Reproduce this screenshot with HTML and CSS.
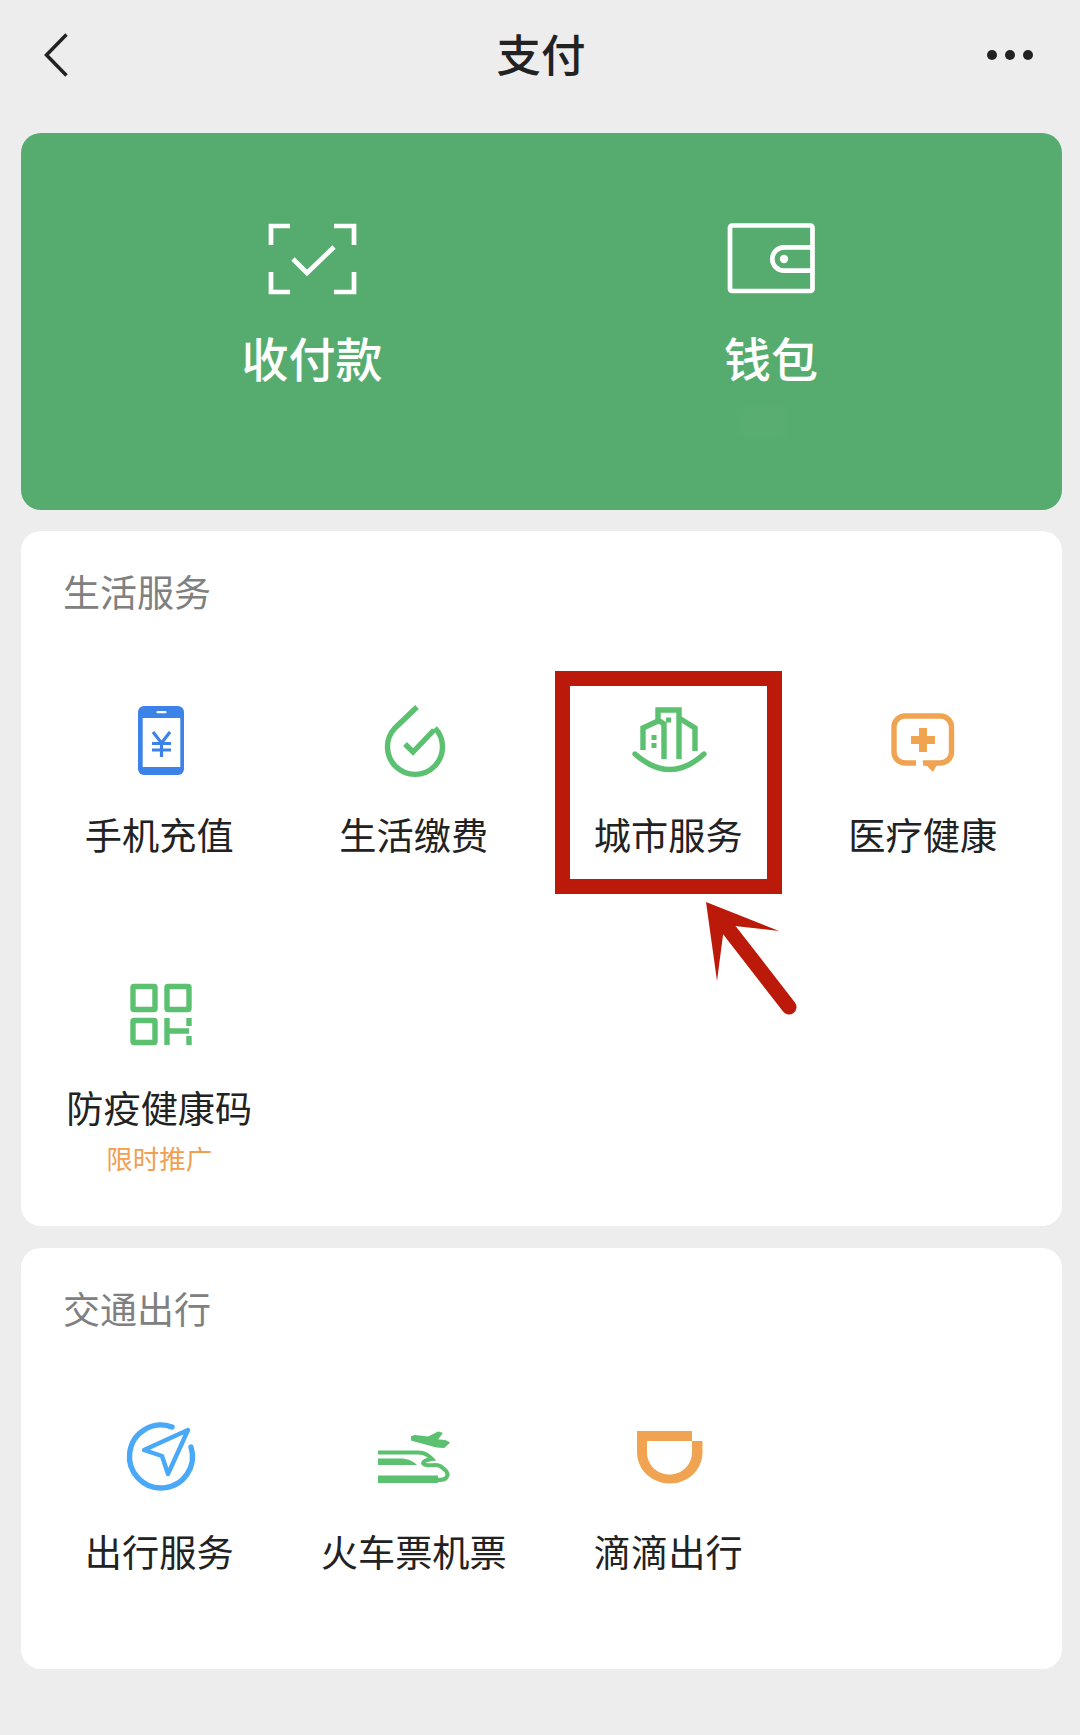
FILE: index.html
```html
<!DOCTYPE html>
<html lang="zh-CN">
	<head>
		<meta charset="UTF-8" />
		<meta name="viewport" content="width=device-width, initial-scale=1.0" />
		<title>支付</title>

		<link rel="stylesheet" href="styles.css">
	</head>
	<body>
		<header class="topbar">
			<svg class="back" viewBox="0 0 24 44" width="24" height="44">
				<path d="M22.5 1.5 L2.5 22 L22.5 42.5" />
			</svg>
			<h1>支付</h1>
			<div class="more"><i></i><i></i><i></i></div>
		</header>

		<main class="main">
			<section class="pay">
				<div class="pay-item">
					<svg class="pay-icon" viewBox="0 0 100 80" width="100" height="80">
						<path d="M28 7 H9 V26 M72 7 H92 V26 M9 53 V73 H28 M72 73 H92 V53" />
						<path d="M31 40 L45 54 L72 28" />
					</svg>
					<span>收付款</span>
				</div>
				<div class="pay-item">
					<svg class="pay-icon" viewBox="0 0 100 80" width="100" height="80">
						<rect x="9" y="6.5" width="82.5" height="65.5" rx="2" />
						<path d="M91 28.3 H63 A11.7 11.7 0 0 0 63 51.7 H91" />
						<circle class="solid" cx="63" cy="40" r="4.2" />
					</svg>
					<span>钱包</span>
					<div class="smudge"></div>
				</div>
			</section>

			<section class="card">
				<h2>生活服务</h2>
				<div class="grid">
					<div class="cell">
						<svg class="icon" viewBox="0 0 80 80" width="80" height="80">
							<rect x="19" y="5" width="46" height="69" rx="6" fill="#3d82e8" />
							<rect x="23.7" y="17" width="37.6" height="49" fill="#fff" />
							<rect x="37.5" y="10" width="10" height="2.2" rx="1" fill="#fff" />
							<path d="M34 31 L42.5 42 L51 31 M33 42.5 H52 M33 49 H52 M42.5 42 V56" fill="none" stroke="#3d82e8" stroke-width="3.2" />
						</svg>
						<div class="label">手机充值</div>
					</div>
					<div class="cell">
						<svg class="icon green" viewBox="0 0 80 80" width="80" height="80">
							<path d="M43 6 L20.5 27.5 A27.5 27.5 0 1 0 61 27" />
							<path d="M31 43 L39 51 L60 29" />
						</svg>
						<div class="label">生活缴费</div>
					</div>
					<div class="cell">
						<svg class="icon green" viewBox="0 0 80 80" width="80" height="80">
							<path d="M7 53 Q42 84 76 53" stroke-linecap="round" />
							<path d="M36 58 V23 L30 19 V9 H51 V58" />
							<path d="M30 20 L15 27 V49 M51 17 L67 27 V50" />
							<path d="M23.5 34 h5 v5 h-5 z M23.5 42 h5 v5 h-5 z M38 16.5 h5 v5 h-5 z" class="solid" />
						</svg>
						<div class="label">城市服务</div>
						<div class="mark"></div>
						<svg class="arrow" viewBox="0 0 96 130" width="96" height="130">
							<path class="arrow-head" d="M4 0 L77 29 L33 24 L21 33 L15 79 Z" />
							<path class="arrow-tail" d="M28 29 L87 105" />
						</svg>
					</div>
					<div class="cell">
						<svg class="icon orange" viewBox="0 0 80 80" width="80" height="80">
							<path d="M33 62 H22 A11 11 0 0 1 11 51 V26 A11 11 0 0 1 22 15 H57.5 A11 11 0 0 1 68.5 26 V51 A11 11 0 0 1 57.5 62 H40" />
							<path class="solid" d="M39 60 H56 L50 71 Z" />
							<path d="M28 39 H52 M40 27 V51" stroke-width="8" />
						</svg>
						<div class="label">医疗健康</div>
					</div>
					<div class="cell">
						<svg class="icon green" viewBox="0 0 80 80" width="80" height="80">
							<rect x="14" y="12.5" width="22" height="23" rx="1" />
							<rect x="48" y="12.5" width="22" height="23" rx="1" />
							<rect x="14" y="46.5" width="22" height="22" rx="1" />
							<path d="M48 44 V71 M48 57 H70 M70 44 V52 M70 62 V71" />
						</svg>
						<div class="label">防疫健康码</div>
						<div class="sub">限时推广</div>
					</div>
				</div>
			</section>

			<section class="card">
				<h2>交通出行</h2>
				<div class="grid">
					<div class="cell">
						<svg class="icon blue" viewBox="0 0 80 80" width="80" height="80">
							<path d="M53 9 A31.5 31.5 0 1 0 72 29" stroke-linecap="round" />
							<path d="M69 12 L25 32 L43 38 L49 56 Z" stroke-width="4.4" stroke-linejoin="round" />
						</svg>
						<div class="label">出行服务</div>
					</div>
					<div class="cell">
						<svg class="icon green" viewBox="0 0 80 80" width="80" height="80">
							<path class="solid plane" d="M37.7 18.7 L41 17.7 L54 19.3 L64 14.3 L67.7 15.3 L62.7 22 L71 22.7 L75 24.7 L70 29.3 L62.7 28.7 L37.7 22 Z" />
							<path d="M4 34.5 H44 C52 34.5 55 38 58 41 C50 42 46 46 52 47 C58 48 62 46 66 48 C72 52 76 56 72 60 C70 62 66 62 64 62" stroke-width="4" />
							<path class="solid" d="M4 40.5 H26 C34 40.5 39 43 43 47 H4 Z M4 57.5 H64 V65 H4 Z" />
						</svg>
						<div class="label">火车票机票</div>
					</div>
					<div class="cell">
						<svg class="icon orange" viewBox="0 0 80 80" width="80" height="80">
							<path class="solid" fill-rule="evenodd" d="M9 13 H64 V23 H74.5 V34 C74.5 52 60 65.5 42 65.5 C24 65.5 9 52 9 34 Z M19 23 V34 C19 47 29 56.5 41.5 56.5 C54 56.5 64 47 64 34 V23 Z" />
						</svg>
						<div class="label">滴滴出行</div>
					</div>
				</div>
			</section>
		</main>
	</body>
</html>
```

FILE: styles.css
```css
* {
	box-sizing: border-box;
}

body {
	margin: 0;
	background-color: #ededed;
	color: #222;
	font-family: "Noto Sans CJK SC", "Noto Sans", sans-serif;
}

.topbar {
	display: grid;
	grid-template-columns: 1fr auto 1fr;
	align-items: center;
	height: 106px;
	padding: 0 46px 0 48px;
}

.topbar h1 {
	margin: 0;
	font-size: 44.5px;
	font-weight: 500;
	line-height: 60px;
}

.back {
	margin: 4px 0 0 -4px;
	fill: none;
	stroke: #222;
	stroke-width: 3.5;
}

.more {
	display: flex;
	justify-content: flex-end;
	gap: 8px;
	margin: 4px 1px 0 0;
}

.more i {
	width: 10px;
	height: 10px;
	border-radius: 50%;
	background-color: #222;
}

.main {
	display: flex;
	flex-direction: column;
	gap: 22px;
	margin-top: 27px;
	padding: 0 18px 0 21px;
}

.pay {
	display: grid;
	grid-template-columns: 459px 459px;
	justify-content: center;
	height: 377px;
	margin-bottom: -1px;
	padding-top: 86px;
	border-radius: 20px;
	background-color: #56ac6e;
	color: #fff;
}

.pay-item {
	display: flex;
	flex-direction: column;
	align-items: center;
	font-size: 47px;
	font-weight: 500;
	line-height: 60px;
}

.pay-icon {
	margin-bottom: 28px;
	fill: none;
	stroke: #fff;
	stroke-width: 4.7;
}

.pay-icon .solid {
	fill: #fff;
	stroke: none;
}

.smudge {
	width: 46px;
	height: 30px;
	margin: 20px 16px 0 0;
	background-color: rgba(255, 255, 255, 0.02);
	filter: blur(3px);
}

.card {
	padding: 35px 12px 47px 11px;
	border-radius: 20px;
	background-color: #fff;
}

.card:last-child {
	padding-bottom: 46px;
}

.card h2 {
	margin: 0 0 85px 31px;
	color: #808080;
	font-size: 37px;
	font-weight: 400;
	line-height: 50px;
}

.grid {
	display: grid;
	grid-template-columns: repeat(4, 254.5px);
	row-gap: 68px;
}

.cell {
	position: relative;
	display: flex;
	flex-direction: column;
	align-items: center;
	min-height: 205px;
}

.icon {
	margin-bottom: 28px;
	fill: none;
	stroke-width: 5.4;
}

.label {
	font-size: 37.2px;
	line-height: 50px;
	white-space: nowrap;
}

.sub {
	margin-top: 6px;
	color: #f0a050;
	font-size: 26.5px;
	line-height: 40px;
}

.green {
	stroke: #5bc06f;
}

.blue {
	stroke: #4aa8f8;
}

.orange {
	stroke: #f0a351;
}

.green .solid {
	fill: #5bc06f;
	stroke: none;
}

.green .plane {
	stroke: #5bc06f;
	stroke-width: 1.5;
	stroke-linejoin: round;
}

.orange .solid {
	fill: #f0a351;
	stroke: none;
}

/* red annotation over the third item */
.mark {
	position: absolute;
	top: -30px;
	left: 14px;
	width: 227px;
	height: 223px;
	border: 15px solid #bb1a0a;
}

.arrow {
	position: absolute;
	top: 201px;
	left: 161px;
}

.arrow-head {
	fill: #bb1a0a;
}

.arrow-tail {
	fill: none;
	stroke: #bb1a0a;
	stroke-width: 15;
	stroke-linecap: round;
}
```
